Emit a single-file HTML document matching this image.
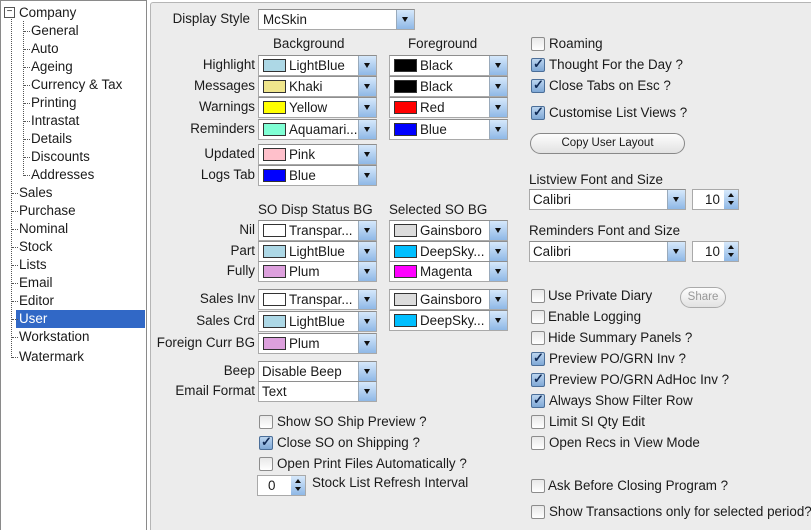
<!DOCTYPE html><html style="overflow:hidden;height:530px"><head><style>
body{margin:0;width:811px;height:530px;background:#fff;font-family:"Liberation Sans",sans-serif;font-size:13.4px;color:#1a1a1a;position:relative;overflow:hidden}
.a{position:absolute;white-space:nowrap}
#tree{position:absolute;left:0;top:0;width:145px;height:540px;border:1px solid #8a8a8a;background:#fff}
#pan{position:absolute;left:150px;top:2px;width:670px;height:540px;background:#ececec;border:1px solid #b5b5b5;border-radius:3px}
.t{position:absolute;height:18px;line-height:18px;white-space:nowrap}
.l{position:absolute;text-align:right;width:120px;height:20px;line-height:20px;white-space:nowrap}
.cb{position:absolute;width:117px;height:19px;background:#fff;border:1px solid #a9a9a9;border-top-color:#8e8e8e;white-space:nowrap}
.cb .sw{position:absolute;left:4px;top:3px;width:21px;height:11px;border:1px solid #333}
.cb .tx{position:absolute;left:30px;top:0;line-height:19px}
.dd{position:absolute;right:0;top:0;width:17px;height:19px;background:linear-gradient(#d6e8fb,#8fb8e6);border-left:1px solid #9ab}
.dd:after{content:"";position:absolute;left:5px;top:7px;border-left:3.5px solid transparent;border-right:3.5px solid transparent;border-top:5px solid #111}
.ck{position:absolute;width:12px;height:12px;border:1px solid #8c8c8c;border-radius:2px;background:linear-gradient(#e8e8e8,#fff)}
.ck.on{background:linear-gradient(#bcd5ef,#7fa8d6);border-color:#4b6e98}
.ck.on:after{content:"✓";position:absolute;left:1px;top:-3px;font-size:13px;font-weight:bold;color:#102a55}
.ct{position:absolute;line-height:16px;white-space:nowrap}
.vl{position:absolute;border-left:1px dotted #555}
.hl{position:absolute;border-top:1px dotted #555;width:6px}
.spin{position:absolute;height:19px;background:#fff;border:1px solid #a9a9a9}
.sb{position:absolute;right:0;top:0;width:14px;height:19px;background:linear-gradient(#d6e8fb,#8fb8e6)}
.sb:before{content:"";position:absolute;left:4px;top:3px;border-left:3px solid transparent;border-right:3px solid transparent;border-bottom:4px solid #111}
.sb:after{content:"";position:absolute;left:4px;top:11px;border-left:3px solid transparent;border-right:3px solid transparent;border-top:4px solid #111}
.btn{position:absolute;border:1px solid #888;border-radius:11px;background:linear-gradient(#fdfdfd,#e2e2e2);text-align:center;font-size:11.5px}
</style></head><body>
<div id="tree">
<div class="a" style="left:3px;top:6px;width:9px;height:9px;border:1px solid #555;background:#fff;font-size:10px;line-height:8px;text-align:center">−</div>
<div class="vl" style="left:10px;top:18px;height:339px"></div>
<div class="vl" style="left:22px;top:20px;height:155px"></div>
<div class="t" style="left:18px;top:3px">Company</div>
<div class="hl" style="left:23px;top:30px"></div><div class="t" style="left:30px;top:21px">General</div>
<div class="hl" style="left:23px;top:48px"></div><div class="t" style="left:30px;top:39px">Auto</div>
<div class="hl" style="left:23px;top:66px"></div><div class="t" style="left:30px;top:57px">Ageing</div>
<div class="hl" style="left:23px;top:84px"></div><div class="t" style="left:30px;top:75px">Currency &amp; Tax</div>
<div class="hl" style="left:23px;top:102px"></div><div class="t" style="left:30px;top:93px">Printing</div>
<div class="hl" style="left:23px;top:120px"></div><div class="t" style="left:30px;top:111px">Intrastat</div>
<div class="hl" style="left:23px;top:138px"></div><div class="t" style="left:30px;top:129px">Details</div>
<div class="hl" style="left:23px;top:156px"></div><div class="t" style="left:30px;top:147px">Discounts</div>
<div class="hl" style="left:23px;top:174px"></div><div class="t" style="left:30px;top:165px">Addresses</div>
<div class="hl" style="left:11px;top:192px"></div><div class="t" style="left:18px;top:183px">Sales</div>
<div class="hl" style="left:11px;top:210px"></div><div class="t" style="left:18px;top:201px">Purchase</div>
<div class="hl" style="left:11px;top:228px"></div><div class="t" style="left:18px;top:219px">Nominal</div>
<div class="hl" style="left:11px;top:246px"></div><div class="t" style="left:18px;top:237px">Stock</div>
<div class="hl" style="left:11px;top:264px"></div><div class="t" style="left:18px;top:255px">Lists</div>
<div class="hl" style="left:11px;top:282px"></div><div class="t" style="left:18px;top:273px">Email</div>
<div class="hl" style="left:11px;top:300px"></div><div class="t" style="left:18px;top:291px">Editor</div>
<div class="a" style="left:15px;top:309px;width:129px;height:18px;background:#3168c6"></div>
<div class="hl" style="left:11px;top:318px"></div><div class="t" style="left:18px;top:309px;color:#fff">User</div>
<div class="hl" style="left:11px;top:336px"></div><div class="t" style="left:18px;top:327px">Workstation</div>
<div class="hl" style="left:11px;top:356px"></div><div class="t" style="left:18px;top:347px">Watermark</div>
</div>
<div id="pan"></div>

<div class="l" style="left:130px;top:9px">Display Style</div>
<div class="cb" style="left:258px;top:9px;width:155px"><div class="tx" style="left:4px">McSkin</div><div class="dd"></div></div>

<div class="a" style="left:273px;top:36px">Background</div>
<div class="a" style="left:408px;top:36px">Foreground</div>

<div class="l" style="left:135px;top:55px">Highlight</div>
<div class="cb" style="left:258px;top:55px"><div class="sw" style="background:#add8e6"></div><div class="tx">LightBlue</div><div class="dd"></div></div>
<div class="cb" style="left:389px;top:55px"><div class="sw" style="background:#000"></div><div class="tx">Black</div><div class="dd"></div></div>
<div class="l" style="left:135px;top:76px">Messages</div>
<div class="cb" style="left:258px;top:76px"><div class="sw" style="background:#f0e68c"></div><div class="tx">Khaki</div><div class="dd"></div></div>
<div class="cb" style="left:389px;top:76px"><div class="sw" style="background:#000"></div><div class="tx">Black</div><div class="dd"></div></div>
<div class="l" style="left:135px;top:97px">Warnings</div>
<div class="cb" style="left:258px;top:97px"><div class="sw" style="background:#ff0"></div><div class="tx">Yellow</div><div class="dd"></div></div>
<div class="cb" style="left:389px;top:97px"><div class="sw" style="background:#f00"></div><div class="tx">Red</div><div class="dd"></div></div>
<div class="l" style="left:135px;top:119px">Reminders</div>
<div class="cb" style="left:258px;top:119px"><div class="sw" style="background:#7fffd4"></div><div class="tx">Aquamari...</div><div class="dd"></div></div>
<div class="cb" style="left:389px;top:119px"><div class="sw" style="background:#00f"></div><div class="tx">Blue</div><div class="dd"></div></div>
<div class="l" style="left:135px;top:144px">Updated</div>
<div class="cb" style="left:258px;top:144px"><div class="sw" style="background:#ffc0cb"></div><div class="tx">Pink</div><div class="dd"></div></div>
<div class="l" style="left:135px;top:165px">Logs Tab</div>
<div class="cb" style="left:258px;top:165px"><div class="sw" style="background:#00f"></div><div class="tx">Blue</div><div class="dd"></div></div>

<div class="a" style="left:258px;top:202px">SO Disp Status BG</div>
<div class="a" style="left:389px;top:202px">Selected SO BG</div>
<div class="l" style="left:135px;top:220px">Nil</div>
<div class="cb" style="left:258px;top:220px"><div class="sw" style="background:#fff"></div><div class="tx">Transpar...</div><div class="dd"></div></div>
<div class="cb" style="left:389px;top:220px"><div class="sw" style="background:#dcdcdc"></div><div class="tx">Gainsboro</div><div class="dd"></div></div>
<div class="l" style="left:135px;top:241px">Part</div>
<div class="cb" style="left:258px;top:241px"><div class="sw" style="background:#add8e6"></div><div class="tx">LightBlue</div><div class="dd"></div></div>
<div class="cb" style="left:389px;top:241px"><div class="sw" style="background:#00bfff"></div><div class="tx">DeepSky...</div><div class="dd"></div></div>
<div class="l" style="left:135px;top:261px">Fully</div>
<div class="cb" style="left:258px;top:261px"><div class="sw" style="background:#dda0dd"></div><div class="tx">Plum</div><div class="dd"></div></div>
<div class="cb" style="left:389px;top:261px"><div class="sw" style="background:#f0f"></div><div class="tx">Magenta</div><div class="dd"></div></div>
<div class="l" style="left:135px;top:289px">Sales Inv</div>
<div class="cb" style="left:258px;top:289px"><div class="sw" style="background:#fff"></div><div class="tx">Transpar...</div><div class="dd"></div></div>
<div class="cb" style="left:389px;top:289px"><div class="sw" style="background:#dcdcdc"></div><div class="tx">Gainsboro</div><div class="dd"></div></div>
<div class="l" style="left:135px;top:311px">Sales Crd</div>
<div class="cb" style="left:258px;top:311px"><div class="sw" style="background:#add8e6"></div><div class="tx">LightBlue</div><div class="dd"></div></div>
<div class="cb" style="left:389px;top:310px"><div class="sw" style="background:#00bfff"></div><div class="tx">DeepSky...</div><div class="dd"></div></div>
<div class="l" style="left:135px;top:333px">Foreign Curr BG</div>
<div class="cb" style="left:258px;top:333px"><div class="sw" style="background:#dda0dd"></div><div class="tx">Plum</div><div class="dd"></div></div>
<div class="l" style="left:135px;top:361px">Beep</div>
<div class="cb" style="left:258px;top:361px"><div class="tx" style="left:3px">Disable Beep</div><div class="dd"></div></div>
<div class="l" style="left:135px;top:381px">Email Format</div>
<div class="cb" style="left:258px;top:381px"><div class="tx" style="left:3px">Text</div><div class="dd"></div></div>

<div class="ck" style="left:259px;top:415px"></div><div class="ct" style="left:277px;top:414px">Show SO Ship Preview ?</div>
<div class="ck on" style="left:259px;top:436px"></div><div class="ct" style="left:277px;top:435px">Close SO on Shipping ?</div>
<div class="ck" style="left:259px;top:457px"></div><div class="ct" style="left:277px;top:456px">Open Print Files Automatically ?</div>
<div class="spin" style="left:257px;top:475px;width:47px"><div class="a" style="left:10px;top:2px">0</div><div class="sb"></div></div>
<div class="ct" style="left:312px;top:475px">Stock List Refresh Interval</div>

<div class="ck" style="left:531px;top:37px"></div><div class="ct" style="left:549px;top:36px">Roaming</div>
<div class="ck on" style="left:531px;top:58px"></div><div class="ct" style="left:549px;top:57px">Thought For the Day ?</div>
<div class="ck on" style="left:531px;top:79px"></div><div class="ct" style="left:549px;top:78px">Close Tabs on Esc ?</div>
<div class="ck on" style="left:531px;top:106px"></div><div class="ct" style="left:549px;top:105px">Customise List Views ?</div>
<div class="btn" style="left:530px;top:133px;width:153px;height:19px;line-height:19px">Copy User Layout</div>
<div class="ct" style="left:529px;top:172px">Listview Font and Size</div>
<div class="cb" style="left:529px;top:189px;width:155px"><div class="tx" style="left:3px">Calibri</div><div class="dd"></div></div>
<div class="spin" style="left:692px;top:189px;width:45px"><div class="a" style="left:12px;top:2px">10</div><div class="sb"></div></div>
<div class="ct" style="left:529px;top:223px">Reminders Font and Size</div>
<div class="cb" style="left:529px;top:241px;width:155px"><div class="tx" style="left:3px">Calibri</div><div class="dd"></div></div>
<div class="spin" style="left:692px;top:241px;width:45px"><div class="a" style="left:12px;top:2px">10</div><div class="sb"></div></div>

<div class="ck" style="left:531px;top:289px"></div><div class="ct" style="left:548px;top:288px">Use Private Diary</div>
<div class="btn" style="left:680px;top:287px;width:44px;height:19px;line-height:19px;color:#999;border-color:#aaa">Share</div>
<div class="ck" style="left:531px;top:310px"></div><div class="ct" style="left:548px;top:309px">Enable Logging</div>
<div class="ck" style="left:531px;top:331px"></div><div class="ct" style="left:548px;top:330px">Hide Summary Panels ?</div>
<div class="ck on" style="left:531px;top:352px"></div><div class="ct" style="left:549px;top:351px">Preview PO/GRN Inv ?</div>
<div class="ck on" style="left:531px;top:373px"></div><div class="ct" style="left:549px;top:372px">Preview PO/GRN AdHoc Inv ?</div>
<div class="ck on" style="left:531px;top:394px"></div><div class="ct" style="left:549px;top:393px">Always Show Filter Row</div>
<div class="ck" style="left:531px;top:415px"></div><div class="ct" style="left:549px;top:414px">Limit SI Qty Edit</div>
<div class="ck" style="left:531px;top:436px"></div><div class="ct" style="left:549px;top:435px">Open Recs in View Mode</div>
<div class="ck" style="left:531px;top:479px"></div><div class="ct" style="left:548px;top:478px">Ask Before Closing Program ?</div>
<div class="ck" style="left:531px;top:505px"></div><div class="ct" style="left:549px;top:504px">Show Transactions only for selected period?</div>
</body></html>
